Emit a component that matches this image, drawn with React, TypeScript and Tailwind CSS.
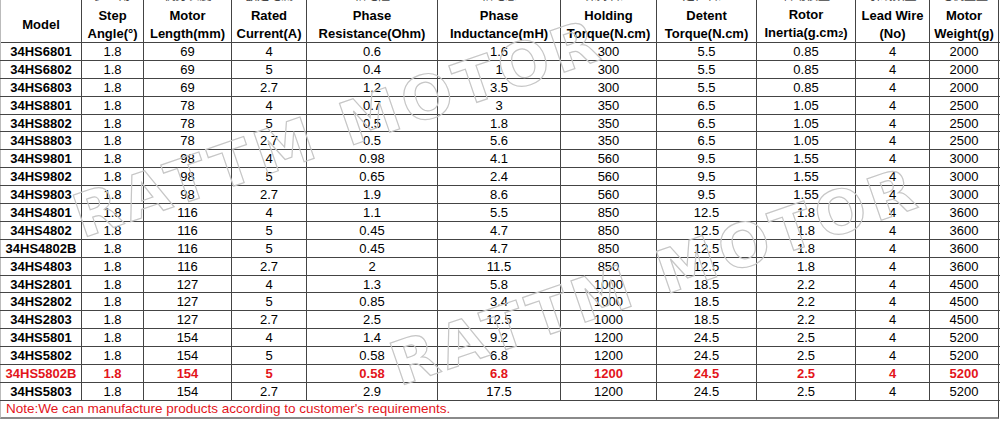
import React from "react";

const cols = "grid grid-cols-[82px_62px_88px_75px_131px_123px_96px_100px_99px_74px_69px]";

const cnTop = ["型号", "步距角", "机身长度", "额定电流", "相电阻", "相电感", "保持转矩", "定位转矩", "转动惯量", "引线数量", "电机重量"];

const headers: [string, React.ReactNode][] = [
  ["Model", null],
  ["Step", "Angle(°)"],
  ["Motor", "Length(mm)"],
  ["Rated", "Current(A)"],
  ["Phase", "Resistance(Ohm)"],
  ["Phase", "Inductance(mH)"],
  ["Holding", "Torque(N.cm)"],
  ["Detent", "Torque(N.cm)"],
  [
    "Rotor",
    <>
      Inertia(g.cm<span className="text-[9px]">2</span>)
    </>,
  ],
  ["Lead Wire", "(No)"],
  ["Motor", "Weight(g)"],
];

const rows: string[][] = [
  ["34HS6801", "1.8", "69", "4", "0.6", "1.6", "300", "5.5", "0.85", "4", "2000"],
  ["34HS6802", "1.8", "69", "5", "0.4", "1", "300", "5.5", "0.85", "4", "2000"],
  ["34HS6803", "1.8", "69", "2.7", "1.2", "3.5", "300", "5.5", "0.85", "4", "2000"],
  ["34HS8801", "1.8", "78", "4", "0.7", "3", "350", "6.5", "1.05", "4", "2500"],
  ["34HS8802", "1.8", "78", "5", "0.5", "1.8", "350", "6.5", "1.05", "4", "2500"],
  ["34HS8803", "1.8", "78", "2.7", "0.5", "5.6", "350", "6.5", "1.05", "4", "2500"],
  ["34HS9801", "1.8", "98", "4", "0.98", "4.1", "560", "9.5", "1.55", "4", "3000"],
  ["34HS9802", "1.8", "98", "5", "0.65", "2.4", "560", "9.5", "1.55", "4", "3000"],
  ["34HS9803", "1.8", "98", "2.7", "1.9", "8.6", "560", "9.5", "1.55", "4", "3000"],
  ["34HS4801", "1.8", "116", "4", "1.1", "5.5", "850", "12.5", "1.8", "4", "3600"],
  ["34HS4802", "1.8", "116", "5", "0.45", "4.7", "850", "12.5", "1.8", "4", "3600"],
  ["34HS4802B", "1.8", "116", "5", "0.45", "4.7", "850", "12.5", "1.8", "4", "3600"],
  ["34HS4803", "1.8", "116", "2.7", "2", "11.5", "850", "12.5", "1.8", "4", "3600"],
  ["34HS2801", "1.8", "127", "4", "1.3", "5.8", "1000", "18.5", "2.2", "4", "4500"],
  ["34HS2802", "1.8", "127", "5", "0.85", "3.4", "1000", "18.5", "2.2", "4", "4500"],
  ["34HS2803", "1.8", "127", "2.7", "2.5", "12.5", "1000", "18.5", "2.2", "4", "4500"],
  ["34HS5801", "1.8", "154", "4", "1.4", "9.2", "1200", "24.5", "2.5", "4", "5200"],
  ["34HS5802", "1.8", "154", "5", "0.58", "6.8", "1200", "24.5", "2.5", "4", "5200"],
  ["34HS5802B", "1.8", "154", "5", "0.58", "6.8", "1200", "24.5", "2.5", "4", "5200"],
  ["34HS5803", "1.8", "154", "2.7", "2.9", "17.5", "1200", "24.5", "2.5", "4", "5200"],
];

const HIGHLIGHT = "34HS5802B";

function Watermark({ className }: { className: string }) {
  return (
    <span
      className={
        "pointer-events-none absolute -translate-x-1/2 -translate-y-1/2 rotate-[-19deg] whitespace-nowrap font-['DejaVu_Sans',sans-serif] text-[60px] font-bold leading-none tracking-[5px] text-transparent [-webkit-text-stroke:1.2px_#c6c6c6] " +
        className
      }
    >
      RATTM MOTOR
    </span>
  );
}

export default function App() {
  return (
    <div className="relative h-[421px] w-[1000px] overflow-hidden bg-white font-['Liberation_Sans',Arial,sans-serif] text-[13px] text-black">
      {/* cropped Chinese header row */}
      <div className={cols + " h-[6px] overflow-hidden"}>
        {cnTop.map((t, i) => (
          <div
            key={i}
            className={
              "overflow-hidden border-r border-[#444] text-center " + (i === 0 ? "border-l border-l-[#bbb]" : "")
            }
          >
            <div className="-mt-[12px] font-['Noto_Sans_CJK_SC',sans-serif] text-[12px] leading-[14px] text-[#444]">
              {i === 0 ? "" : t}
            </div>
          </div>
        ))}
      </div>

      {/* English header */}
      <div className={cols + " h-[37px] border-b border-[#444] font-bold"}>
        {headers.map(([a, b], i) => (
          <div
            key={i}
            className={
              "flex flex-col items-center justify-center whitespace-nowrap border-r border-[#444] leading-[18px] " +
              (i === 0 ? "border-l border-l-[#bbb]" : "")
            }
          >
            <span>{a}</span>
            {b ? <span>{b}</span> : null}
          </div>
        ))}
      </div>

      {/* data rows */}
      {rows.map((r) => {
        const hot = r[0] === HIGHLIGHT;
        return (
          <div
            key={r[0]}
            className={cols + " h-[17.9px] border-b border-[#444] " + (hot ? "font-bold text-[#e3141b]" : "")}
          >
            {r.map((v, i) => (
              <div
                key={i}
                className={
                  "flex items-center justify-center border-r border-[#444] leading-none " +
                  (i === 0 ? "border-l border-l-[#bbb] font-bold" : "")
                }
              >
                {v}
              </div>
            ))}
          </div>
        );
      })}

      {/* note row */}
      <div className="flex h-[18px] w-[999px] items-center border-b-2 border-r border-l border-b-[#8a8a8a] border-r-[#444] border-l-[#bbb] pl-[5px] text-[13.5px] text-[#e3141b]">
        Note:We can manufacture products according to customer's requirements.
      </div>

      <Watermark className="left-[338px] top-[128px]" />
      <Watermark className="left-[655px] top-[276px]" />
    </div>
  );
}
